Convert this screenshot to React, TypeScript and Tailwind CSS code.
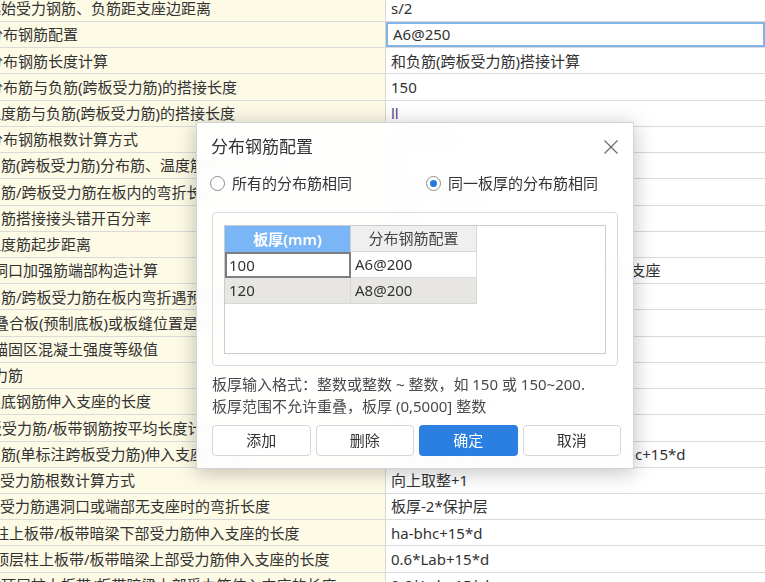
import React from 'react';

type Row = { label: string; value: string; cut: string };

const rows: Row[] = [
  { label: '起始受力钢筋、负筋距支座边距离', value: 's/2', cut: '-ml-[14px]' },
  { label: '分布钢筋配置', value: 'A6@250', cut: '-ml-[12px]' },
  { label: '分布钢筋长度计算', value: '和负筋(跨板受力筋)搭接计算', cut: '-ml-[12px]' },
  { label: '分布筋与负筋(跨板受力筋)的搭接长度', value: '150', cut: '-ml-[12px]' },
  { label: '温度筋与负筋(跨板受力筋)的搭接长度', value: 'll', cut: '-ml-[14px]' },
  { label: '分布钢筋根数计算方式', value: '向下取整+1', cut: '-ml-[12px]' },
  { label: '负筋(跨板受力筋)分布筋、温度筋是否带弯钩', value: '否', cut: '-ml-[14px]' },
  { label: '负筋/跨板受力筋在板内的弯折长度', value: '板厚-2*保护层', cut: '-ml-[14px]' },
  { label: '负筋搭接接头错开百分率', value: '50%', cut: '-ml-[14px]' },
  { label: '温度筋起步距离', value: 's', cut: '-ml-[14px]' },
  { label: '洞口加强筋端部构造计算', value: '按板厚-2*保护层弯折, 遇支座时伸入支座', cut: '-ml-[7px]' },
  { label: '负筋/跨板受力筋在板内弯折遇预制板时的长度', value: '按规范计算', cut: '-ml-[14px]' },
  { label: '叠合板(预制底板)或板缝位置是否计算', value: '是', cut: '-ml-[6px]' },
  { label: '锚固区混凝土强度等级值', value: 'C30', cut: '-ml-[7px]' },
  { label: '受力筋', value: '', cut: '-ml-[22px]' },
  { label: '板底钢筋伸入支座的长度', value: 'max(ha/2,5*d)', cut: '-ml-[14px]' },
  { label: '跨板受力筋/板带钢筋按平均长度计算', value: '否', cut: '-ml-[28px]' },
  { label: '负筋(单标注跨板受力筋)伸入支座的长度', value: '能直锚就直锚,否则按公式计算:ha-bhc+15*d', cut: '-ml-[14px]' },
  { label: '跨板受力筋根数计算方式', value: '向上取整+1', cut: '-ml-[30px]' },
  { label: '跨板受力筋遇洞口或端部无支座时的弯折长度', value: '板厚-2*保护层', cut: '-ml-[30px]' },
  { label: '柱上板带/板带暗梁下部受力筋伸入支座的长度', value: 'ha-bhc+15*d', cut: '-ml-[6px]' },
  { label: '顶层柱上板带/板带暗梁上部受力筋伸入支座的长度', value: '0.6*Lab+15*d', cut: '-ml-[6px]' },
  { label: '非顶层柱上板带/板带暗梁上部受力筋伸入支座的长度', value: '0.6*Lab+15*d', cut: '-ml-[14px]' },
];

function Radio({ checked, label }: { checked?: boolean; label: string }) {
  return (
    <div className="flex items-center gap-[7px]">
      <span className="w-[15px] h-[15px] rounded-full border border-[#8c8c8c] bg-white flex items-center justify-center">
        {checked && <span className="w-[7px] h-[7px] rounded-full bg-[#2479e0]" />}
      </span>
      <span>{label}</span>
    </div>
  );
}

export default function App() {
  return (
    <div className="relative w-[765px] h-[582px] overflow-hidden bg-white text-[15px] text-[#333] font-['Noto_Sans','Noto_Sans_CJK_SC',sans-serif]">
      {/* background settings table */}
      <div className="flex flex-col -mt-[4.2px]">
        {rows.map((r, i) => (
          <div key={i} className="flex h-[26.22px] shrink-0 border-b border-[#dadada]">
            <div className="w-[386px] shrink-0 overflow-hidden whitespace-nowrap bg-[#fdfae6] border-r border-[#d8d8d0] flex items-center">
              <span className={r.cut}>{r.label}</span>
            </div>
            {i === 1 ? (
              <div className="flex-1 flex items-center pl-[5px] border-2 border-[#80b3e6] whitespace-nowrap">
                {r.value}
              </div>
            ) : (
              <div className={`flex-1 flex items-center pl-[5px] whitespace-nowrap overflow-hidden ${i === 4 ? 'text-[#5b3f8c]' : ''}`}>
                {r.value}
              </div>
            )}
          </div>
        ))}
      </div>

      {/* dialog */}
      <div className="absolute left-[196px] top-[122px] w-[438px] h-[347px] flex flex-col px-[15px] bg-white/95 backdrop-blur-[8px] border border-[#d4d4d4] shadow-[0_3px_20px_rgba(0,0,0,0.25)]">
        <div className="h-[48px] shrink-0 flex items-center justify-between -mx-px">
          <span className="text-[17px] text-[#333]">分布钢筋配置</span>
          <svg width="14" height="14" viewBox="0 0 14 14" className="mr-[1px]">
            <path d="M0.5 0.5L13.5 13.5M13.5 0.5L0.5 13.5" stroke="#6a6a6a" strokeWidth="1.2" fill="none" />
          </svg>
        </div>

        <div className="h-[24px] shrink-0 flex items-center">
          <div className="w-[216px] -ml-[2px]">
            <Radio label="所有的分布筋相同" />
          </div>
          <Radio checked label="同一板厚的分布筋相同" />
        </div>

        <div className="mt-[17px] h-[154px] shrink-0 border border-[#d9d9d9] rounded-[4px] px-[11px] pt-[12px]">
          <div className="h-[129px] border border-[#cbcbcb] bg-white">
            <div className="grid grid-cols-[126px_126px] w-[252px]">
              <div className="h-[26px] flex items-center justify-center bg-[#7ab6f5] text-white font-semibold border-r border-[#d0d0d0]">
                板厚(mm)
              </div>
              <div className="h-[26px] flex items-center justify-center bg-[#efefef] text-[#444] border-r border-b border-[#d6d6d6]">
                分布钢筋配置
              </div>
              <div className="h-[26px] flex items-center pl-[2px] bg-white border-2 border-[#7e7e7e]">100</div>
              <div className="h-[26px] flex items-center pl-[4px] bg-white border-r border-b border-[#dadada]">A6@200</div>
              <div className="h-[26px] flex items-center pl-[4px] bg-[#e8e6e3] border-r border-b border-[#d8d8d8]">120</div>
              <div className="h-[26px] flex items-center pl-[4px] bg-[#e8e6e3] border-r border-b border-[#d8d8d8]">A8@200</div>
            </div>
          </div>
        </div>

        <div className="mt-[7px] leading-[22px] text-[#4a4a4a]">
          <div>板厚输入格式：整数或整数 ~ 整数，如 150 或 150~200.</div>
          <div>板厚范围不允许重叠，板厚 (0,5000] 整数</div>
        </div>

        <div className="mt-[8px] -mr-[3px] grid grid-cols-4 gap-[5px]">
          <button className="h-[31px] rounded-[4px] border border-[#d6d6d6] bg-white text-[#333]">添加</button>
          <button className="h-[31px] rounded-[4px] border border-[#d6d6d6] bg-white text-[#333]">删除</button>
          <button className="h-[31px] rounded-[4px] bg-[#2b7fe1] text-white">确定</button>
          <button className="h-[31px] rounded-[4px] border border-[#d6d6d6] bg-white text-[#333]">取消</button>
        </div>
      </div>
    </div>
  );
}
